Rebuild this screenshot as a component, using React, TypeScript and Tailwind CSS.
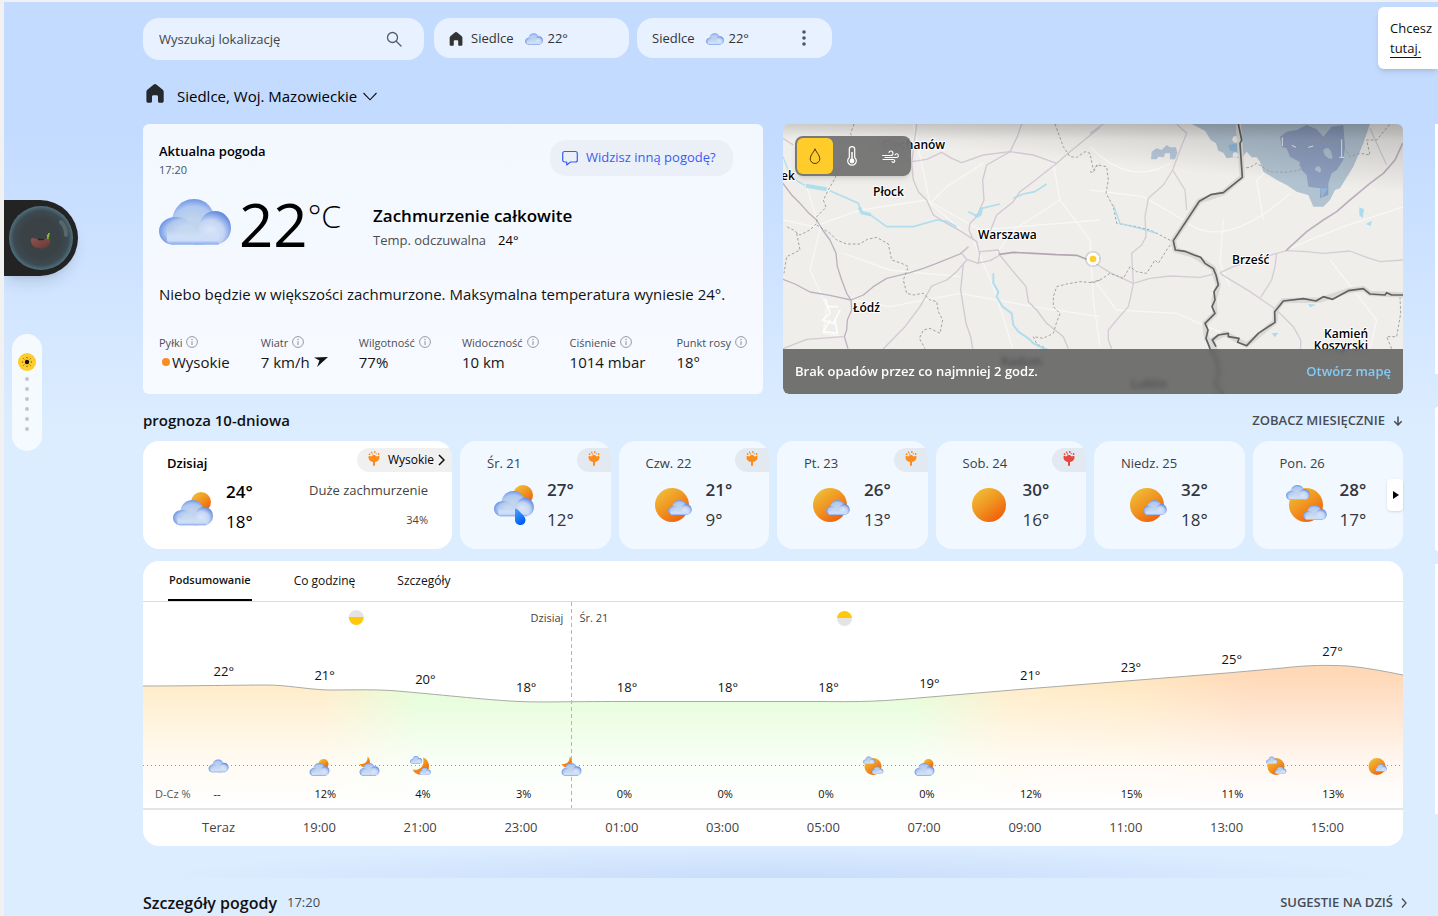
import type { ReactNode } from "react";

type Sky = "cloud" | "mostly" | "rain" | "partly" | "sun" | "mixed" | "moon" | "moonMixed";

interface Day {
    label: string;
    high: string;
    low: string;
    sky: Sky;
    pollen?: "orange" | "red";
}

const days: Day[] = [
    { label: "Śr. 21", high: "27°", low: "12°", sky: "rain", pollen: "orange" },
    { label: "Czw. 22", high: "21°", low: "9°", sky: "partly", pollen: "orange" },
    { label: "Pt. 23", high: "26°", low: "13°", sky: "partly", pollen: "orange" },
    { label: "Sob. 24", high: "30°", low: "16°", sky: "sun", pollen: "red" },
    { label: "Niedz. 25", high: "32°", low: "18°", sky: "partly" },
    { label: "Pon. 26", high: "28°", low: "17°", sky: "mixed" },
];

// top = distance of the temperature label from the top of the plot
const hours = [
    { time: "Teraz", temp: "22°", rain: "--", top: 59 },
    { time: "19:00", temp: "21°", rain: "12%", top: 63 },
    { time: "21:00", temp: "20°", rain: "4%", top: 67 },
    { time: "23:00", temp: "18°", rain: "3%", top: 75 },
    { time: "01:00", temp: "18°", rain: "0%", top: 75 },
    { time: "03:00", temp: "18°", rain: "0%", top: 75 },
    { time: "05:00", temp: "18°", rain: "0%", top: 75 },
    { time: "07:00", temp: "19°", rain: "0%", top: 71 },
    { time: "09:00", temp: "21°", rain: "12%", top: 63 },
    { time: "11:00", temp: "23°", rain: "15%", top: 55 },
    { time: "13:00", temp: "25°", rain: "11%", top: 47 },
    { time: "15:00", temp: "27°", rain: "13%", top: 39 },
];

// one slot per hour, only hours where the sky changes get an icon
const skyByHour: Record<number, Sky> = {
    0: "cloud",
    2: "mostly",
    3: "moon",
    4: "moonMixed",
    7: "moon",
    13: "mixed",
    14: "mostly",
    21: "mixed",
    23: "partly",
};

const metrics = [
    { label: "Pyłki", value: "Wysokie", dot: true },
    { label: "Wiatr", value: "7 km/h", arrow: true },
    { label: "Wilgotność", value: "77%" },
    { label: "Widoczność", value: "10 km" },
    { label: "Ciśnienie", value: "1014 mbar" },
    { label: "Punkt rosy", value: "18°" },
];

function Gradients() {
    return (
        <svg className="absolute h-0 w-0" aria-hidden="true">
            <defs>
                <radialGradient id="cloudBack" cx="0.5" cy="0.7" r="0.72">
                    <stop offset="0.3" stopColor="#c1d4ee" />
                    <stop offset="0.72" stopColor="#b0c8f0" />
                    <stop offset="1" stopColor="#668fe8" />
                </radialGradient>
                <radialGradient id="cloudLeft" cx="0.65" cy="0.55" r="0.66">
                    <stop offset="0.35" stopColor="#c5d8ef" />
                    <stop offset="0.75" stopColor="#b0c8ef" />
                    <stop offset="1" stopColor="#6f97e8" />
                </radialGradient>
                <radialGradient id="cloudRight" cx="0.42" cy="0.65" r="0.64">
                    <stop offset="0" stopColor="#e1ebfb" />
                    <stop offset="0.6" stopColor="#c3d5f4" />
                    <stop offset="1" stopColor="#688ee0" />
                </radialGradient>
                <linearGradient id="cloudBase" x1="0" y1="0" x2="0" y2="1">
                    <stop offset="0" stopColor="#c8daf1" stopOpacity="0" />
                    <stop offset="0.45" stopColor="#cfdff6" />
                    <stop offset="0.75" stopColor="#cbdcf8" />
                    <stop offset="1" stopColor="#83a7ee" />
                </linearGradient>
                <linearGradient id="sunFill" x1="0.1" y1="0.1" x2="0.75" y2="0.95">
                    <stop offset="0" stopColor="#f1bd38" />
                    <stop offset="0.5" stopColor="#f09420" />
                    <stop offset="1" stopColor="#f0600c" />
                </linearGradient>
                <linearGradient id="dropFill" x1="0" y1="0" x2="0.5" y2="1">
                    <stop offset="0" stopColor="#4fa3ff" />
                    <stop offset="1" stopColor="#005df2" />
                </linearGradient>
            </defs>
        </svg>
    );
}

function CloudShape({ transform }: { transform?: string }) {
    return (
        <g transform={transform}>
            <path d="M13 30C11 12 21 0 35 0S57 12 56 28L50 40H16Z" fill="url(#cloudBack)" />
            <path d="M14 45.500C6 45.500 0 39.500 0 32S7 18 16.500 18C25 18 31 22 34 28L46 36V45.500Z" fill="url(#cloudLeft)" />
            <path d="M36 45.500L40 28C41 19 47 12 56 12S72 19.500 72 29 65 45.500 56 45.500Z" fill="url(#cloudRight)" />
            <path d="M8 30H60V45.500H14C10 45.500 8 44 8 40Z" fill="url(#cloudBase)" />
        </g>
    );
}

function SkyIcon({ sky, className }: { sky: Sky; className: string }) {
    return (
        <svg viewBox="0 0 42 42" className={className} aria-hidden="true">
            {sky === "cloud" && <CloudShape transform="translate(1 7) scale(0.56)" />}
            {sky === "mostly" && (
                <>
                    <circle cx="29" cy="16" r="10" fill="url(#sunFill)" />
                    <CloudShape transform="translate(1 14) scale(0.555)" />
                </>
            )}
            {sky === "rain" && (
                <>
                    <circle cx="30" cy="11" r="10" fill="url(#sunFill)" />
                    <CloudShape transform="translate(1 7) scale(0.555)" />
                    <path d="M22 25Q23 24 24 25C29 30 33 33 32.500 36.500C32 39.500 30 41 27.500 41C24 41 22 38.500 22 36Z" fill="url(#dropFill)" />
                </>
            )}
            {(sky === "partly" || sky === "sun") && <circle cx="20" cy="21" r="17" fill="url(#sunFill)" />}
            {sky === "partly" && <CloudShape transform="translate(16 16) scale(0.33)" />}
            {sky === "mixed" && (
                <>
                    <circle cx="20" cy="21" r="17" fill="url(#sunFill)" />
                    <CloudShape transform="translate(0 1) scale(0.33)" />
                    <CloudShape transform="translate(17 21) scale(0.33)" />
                </>
            )}
            {sky === "moon" && (
                <>
                    <path d="M17 1C24 6 24 20 13 22C8 23 3 21 1 16C10 17 18 12 17 1Z" fill="url(#sunFill)" />
                    <CloudShape transform="translate(1 14) scale(0.555)" />
                </>
            )}
            {sky === "moonMixed" && (
                <>
                    <path d="M26 3C42 8 42 32 26 37C16 39 8 34 5 27C20 30 30 20 26 3Z" fill="url(#sunFill)" />
                    <CloudShape transform="translate(0 0) scale(0.34)" />
                    <CloudShape transform="translate(18 23) scale(0.33)" />
                </>
            )}
        </svg>
    );
}

function HomeIcon({ className }: { className: string }) {
    return (
        <svg viewBox="0 0 18 19" className={className} aria-hidden="true">
            <path d="M7.800.5a2 2 0 0 1 2.500 0l6.500 5.200c.6.5.9 1.200.9 2V17c0 1-.8 1.800-1.800 1.800h-2.400c-.8 0-1.500-.7-1.500-1.500v-4.600c0-.8-.6-1.400-1.400-1.400H7.400c-.8 0-1.400.6-1.400 1.400v4.600c0 .8-.7 1.500-1.500 1.500H2.200C1.200 18.800.4 18 .4 17V7.700c0-.8.300-1.500.9-2Z" fill="currentColor" />
        </svg>
    );
}

function InfoIcon() {
    return (
        <svg viewBox="0 0 12 12" className="h-3 w-3" aria-hidden="true">
            <circle cx="6" cy="6" r="5.400" fill="none" stroke="#8b8f95" strokeWidth="0.9" />
            <path d="M6 5.200V9" stroke="#8b8f95" strokeWidth="1" />
            <circle cx="6" cy="3.500" r="0.700" fill="#8b8f95" />
        </svg>
    );
}

function PollenIcon({ color }: { color: "orange" | "red" }) {
    return (
        <svg viewBox="0 0 12 15" className="h-[15px] w-3" fill={color === "red" ? "#e8473c" : "#fc8d1c"} aria-hidden="true">
            <path d="M.6 5.200C1.600 4.600 2.600 5 3.300 5.500C4 4.800 5 4.100 6 4.100S8 4.800 8.700 5.500C9.400 5 10.400 4.600 11.400 5.200C11.900 8 10.300 10.500 7 10.900V14.500L6 15L5 14.500V10.900C1.700 10.500.1 8 .6 5.200Z" />
            <circle cx="1.600" cy="3.200" r="0.900" />
            <circle cx="3.600" cy="1.400" r="0.800" />
            <circle cx="4.600" cy="3" r="0.700" />
            <circle cx="6.800" cy="1" r="0.900" />
            <circle cx="8.200" cy="2.600" r="0.700" />
            <circle cx="10.600" cy="3" r="0.900" />
        </svg>
    );
}

function Header() {
    return (
        <header className="flex items-start">
            <label className="flex h-[42px] w-[281px] items-center rounded-2xl bg-[#e7f1ff] pl-4 pr-[22px]">
                <input
                    type="text"
                    aria-label="Wyszukaj lokalizację"
                    placeholder="Wyszukaj lokalizację"
                    className="min-w-0 flex-1 bg-transparent pt-0.5 text-[13px] text-[#333] outline-none placeholder:text-[#444]"
                />
                <svg viewBox="0 0 16 16" className="h-4 w-4" fill="none" stroke="#555d66" strokeWidth="1.300" aria-hidden="true">
                    <circle cx="6.500" cy="6.500" r="5" />
                    <path d="M10.200 10.200L15 15" strokeLinecap="round" />
                </svg>
            </label>
            <button className="ml-2.5 flex h-10 w-[195px] items-center rounded-2xl bg-[#e7f1ff] pl-[15px] pt-px text-[13px] text-[#333]">
                <HomeIcon className="mr-2 h-[14px] w-[14px]" />
                Siedlce
                <svg viewBox="0 0 72 46" className="ml-3 mr-1 h-3 w-[18px]" aria-hidden="true">
                    <CloudShape />
                </svg>
                22°
            </button>
            <div className="ml-2 flex h-10 w-[195px] items-center rounded-2xl bg-[#e7f1ff] pl-[15px] pr-5 text-[13px] text-[#333]">
                <button className="flex flex-1 items-center pt-px">
                    Siedlce
                    <svg viewBox="0 0 72 46" className="ml-3 mr-1 h-3 w-[18px]" aria-hidden="true">
                        <CloudShape />
                    </svg>
                    22°
                </button>
                <button aria-label="Więcej opcji" className="flex w-4 justify-center">
                    <svg viewBox="0 0 4 16" className="h-4 w-1" fill="#50565e" aria-hidden="true">
                        <circle cx="2" cy="2" r="1.800" />
                        <circle cx="2" cy="8" r="1.800" />
                        <circle cx="2" cy="14" r="1.800" />
                    </svg>
                </button>
            </div>
        </header>
    );
}

function CurrentWeather() {
    return (
        <section className="flex h-[270px] flex-col rounded-md bg-linear-to-b from-[#f3f8ff] to-[#f7faff] px-4 pt-4">
            <div className="flex justify-between">
                <div>
                    <h2 className="text-[13px] leading-[22px] font-semibold text-black">Aktualna pogoda</h2>
                    <p className="text-[11px] leading-4 text-[#4d5258]">17:20</p>
                </div>
                <button className="mr-3.5 flex h-9 w-[183px] items-center gap-2 rounded-2xl bg-[#ebf0f8] pl-3 text-[13px] text-[#3a5cf0]">
                    <svg viewBox="0 0 16 16" className="h-4 w-4" fill="none" stroke="currentColor" strokeWidth="1.200" strokeLinejoin="round" aria-hidden="true">
                        <path d="M2.600 1.500H13.400C14.500 1.500 15.300 2.300 15.300 3.400V10C15.300 11.100 14.500 12 13.400 12H8.500L4.700 14.900V12H2.600C1.500 12 .7 11.100.7 10V3.400C.7 2.300 1.500 1.500 2.600 1.500Z" />
                    </svg>
                    Widzisz inną pogodę?
                </button>
            </div>
            <div className="flex h-[92px] items-center">
                <svg viewBox="0 0 72 46" className="mb-1 h-[46px] w-[72px] shrink-0" aria-hidden="true">
                    <CloudShape />
                </svg>
                <div className="ml-2 flex w-[134px] items-start text-black">
                    <span className="text-[60px] leading-[72px]">22</span>
                    <span className="text-[32px] leading-[56px] font-light">°C</span>
                </div>
                <div className="pt-2">
                    <p className="text-[17px] leading-6 font-semibold text-black">Zachmurzenie całkowite</p>
                    <p className="flex gap-3 text-[13px] leading-6 text-[#4b4f55]">
                        Temp. odczuwalna <span className="text-black">24°</span>
                    </p>
                </div>
            </div>
            <p className="mt-3 text-[15px] leading-6 text-[#111]">
                Niebo będzie w większości zachmurzone. Maksymalna temperatura wyniesie 24°.
            </p>
            <dl className="mt-7 flex justify-between">
                {metrics.map((m) => (
                    <div key={m.label}>
                        <dt className="flex gap-1 text-[11px] leading-[18px] text-[#4b4f55]">
                            {m.label}
                            <span className="pt-0.5">
                                <InfoIcon />
                            </span>
                        </dt>
                        <dd className="flex items-center text-[15px] leading-5 text-[#151515]">
                            {m.dot && <span className="ml-[3px] mr-0.5 h-2 w-2 rounded-full bg-[#fc8d1c]" />}
                            {m.value}
                            {m.arrow && (
                                <svg viewBox="0 0 14 10" className="ml-1 h-2.5 w-3.5" aria-hidden="true">
                                    <path d="M0 .6L14 0L3 10L5.500 3.500Z" fill="#111" />
                                </svg>
                            )}
                        </dd>
                    </div>
                ))}
            </dl>
        </section>
    );
}

function MapDrawing() {
    return (
        <svg viewBox="0 0 620 270" preserveAspectRatio="xMidYMid slice" className="h-full w-full" aria-hidden="true">
            <defs>
                <linearGradient id="mapShade" x1="0" y1="0" x2="0" y2="1">
                    <stop offset="0" stopColor="#000" stopOpacity="0.12" />
                    <stop offset="1" stopColor="#000" stopOpacity="0" />
                </linearGradient>
                <linearGradient id="mapCorner" x1="0.65" y1="0.4" x2="0.85" y2="0">
                    <stop offset="0" stopColor="#000" stopOpacity="0" />
                    <stop offset="1" stopColor="#000" stopOpacity="0.3" />
                </linearGradient>
            </defs>
            <rect width="620" height="270" fill="#efeeeb" />
            <g transform="translate(-3 -4) scale(0.33333)" fill="none" strokeLinejoin="round">
                <g stroke="#f7f7f5" strokeWidth="4">
                    <path d="M9 300L100 320L240 270L440 240L600 330L960 300" />
                    <path d="M80 200L120 330L90 450L140 560L130 640L190 650" />
                    <path d="M190 400L330 450L540 470M400 12L450 250L580 360L640 500L700 690" />
                    <path d="M820 130L840 240L930 360L940 540L960 680" />
                    <path d="M220 540L330 560L540 520L760 560L960 590" />
                    <path d="M610 130L500 200L450 250M650 400L700 330L840 240" />
                </g>
                <path d="M135 535L150 580L128 600L160 610L180 570L165 600L172 640L130 635L150 600M140 560L175 560" stroke="#fdfdfd" strokeWidth="5" />
                <g stroke="#bdb0be" strokeWidth="4">
                    <path d="M9 190L35 225L60 250L85 278L110 300L128 330L150 360L168 400L172 440L185 480L200 520L213 540L215 570L202 600L200 630L193 650L204 686" />
                    <path d="M9 478L45 492L90 516L150 526L213 540L250 525L280 500L320 475L390 458L430 445L470 430L540 402L565 380" />
                </g>
                <g stroke="#d3c8d4" strokeWidth="4">
                    <path d="M565 380L545 400L560 418L595 430L600 395L655 390L660 405L630 422L590 430" />
                    <path d="M410 12L395 130L400 180L415 215L440 240L460 285L500 310L545 335L590 365L598 400" />
                    <path d="M395 125L440 118L485 97L515 115L545 128L610 105L690 95L760 105L830 130L870 95L960 22" />
                    <path d="M725 12L712 50L690 95L620 135L608 180L612 240L590 290L570 310L567 330L580 360" />
                    <path d="M830 130L760 185L720 215L700 245L650 285L640 310L630 335" />
                    <path d="M560 420L530 455L500 480L455 498L420 560L375 620L310 686" />
                    <path d="M550 430L542 510L550 560L558 610L572 650L578 686" />
                    <path d="M655 400L700 455L738 500L745 545L770 570L800 610L850 650L865 686" />
                    <path d="M9 686L80 658L190 650M9 55L40 75" />
                </g>
                <path d="M658 403L700 397L760 400L830 404L890 406L920 418L960 415" stroke="#b4a6b6" strokeWidth="5" />
                <g stroke="#a3a3a1" strokeWidth="3" strokeDasharray="8 6">
                    <path d="M222 12L212 40L218 60L180 130L165 175L145 210L130 240L138 262L110 290L110 310L90 330L60 345L40 330L20 320" />
                    <path d="M110 315L150 340L170 360L200 372L240 372L262 358L290 352L325 372L335 420L365 430L385 440L370 480L380 520L400 525L430 520L450 540L470 545L475 575L488 600L480 640L450 625L430 630L418 655L435 686" />
                    <path d="M50 340L60 390L20 410L12 460M825 12L850 80L870 110L890 112L915 95L930 100L940 150L960 130" />
                    <path d="M960 480L940 488L900 485L860 492L830 500L820 530L820 560L840 580L828 612L820 640L790 655L760 650L770 672L800 686" />
                </g>
                <g stroke="#a9dcee" strokeWidth="5" opacity="0.9">
                    <path d="M9 110L22 145L35 165L55 185L75 196" strokeWidth="4" />
                    <path d="M150 212L235 250L245 280L270 284L320 320L400 320L470 300L500 304L530 320" />
                    <path d="M78 197L140 208" strokeWidth="12" />
                    <path d="M238 262L246 278L272 284" strokeWidth="10" />
                    <path d="M565 275L595 290L605 265L660 252M700 235L730 222L765 215L800 192" />
                    <path d="M584 288L600 284L604 264" strokeWidth="10" />
                    <path d="M640 460L640 490L655 515L650 530L668 560L695 580L700 615L715 635L745 655L760 670L800 690" strokeWidth="6" />
                </g>
            </g>
            <g transform="translate(307 -4) scale(0.33333)" fill="none" strokeLinejoin="round">
                <g stroke="#f7f7f5" strokeWidth="4">
                    <path d="M0 80Q120 200 240 130M0 210L160 230L280 300Q400 400 600 220" />
                    <path d="M20 490L80 570L260 580L400 640M400 300L390 430L420 500M600 90L500 180L520 300" />
                    <path d="M720 420L860 600L840 686M560 400L760 320L940 260" />
                </g>
                <path d="M305 12H840L820 70L790 140L750 205L735 210L720 240L700 260H670L655 225L620 215L590 195L560 180L520 155L510 125L500 112L485 112L470 95L455 115L430 112L410 115L400 98L385 92L378 70L362 60L345 32Z" fill="#b1c2d0" stroke="none" />
                <path d="M570 50L590 35L620 30L650 15L680 28L700 50L725 20L760 15L765 80L760 120L740 150L725 160L715 190V225L690 235V205L655 200L650 165L635 150L628 125L600 110L590 85L575 80Z" fill="#8f9fc0" stroke="none" />
                <path d="M183 118L185 95L200 85L215 90L230 75L240 82L258 82L262 100L255 118L240 118L240 100L225 100L222 112L205 110L200 118Z" fill="#b5c6d8" stroke="none" />
                <path d="M700 90C715 75 725 90 728 115C715 120 700 105 700 90ZM675 150A9 11 0 1 1 690 158Z" fill="#b1c2d0" stroke="none" />
                <path d="M690 205L713 205L695 235ZM415 75L445 70L440 95L420 92Z" fill="#8fb6d9" stroke="none" />
                <circle cx="437" cy="58" r="10" fill="#eeedeb" />
                <circle cx="436" cy="105" r="8" fill="#eeedeb" />
                <g stroke="#d6ccd7" strokeWidth="4">
                    <path d="M260 12L290 40L270 90L248 150L220 195L175 235L165 290L168 350L155 375L125 400L130 490L122 530L115 560L80 600L55 630L55 660L65 686" />
                    <path d="M248 150L285 210L290 270M0 420L60 458L130 490L180 475L240 468L330 472L380 460" />
                    <path d="M390 458L430 440L560 400L588 392L650 395L700 400L780 393L830 412L870 425L940 420" />
                    <path d="M560 400L555 440L545 480L512 532M390 460L480 515L560 570L610 620L632 660V686M840 25L860 70L890 135" />
                    <path d="M0 40L40 12" />
                </g>
                <path d="M588 392L650 335L700 300L740 275L780 240L840 190L880 160L915 120L938 70" stroke="#bdb0be" strokeWidth="5" />
                <g stroke="#a3a3a1" strokeWidth="3" strokeDasharray="8 6">
                    <path d="M0 155L10 158L20 135L50 140L55 180L48 220L70 260L80 310L130 318L180 330L210 345L248 365L230 390L205 430L195 420L170 460L140 455L120 440L100 475L60 460L30 480L0 488" />
                    <path d="M455 145L480 142L500 130L540 155L590 157L630 150L630 110L640 80L670 50L710 70L750 65L780 110L810 100L840 105L830 60L860 60L900 12" />
                    <path d="M930 530L932 580L920 650L890 650L905 686" />
                </g>
                <g stroke="#d9d9d7" strokeWidth="16">
                    <path d="M445 12L457 170L400 218L328 243L250 362L256 390L310 405L370 445L385 495L372 540L375 580L345 610L350 655L375 686L390 760L375 822" />
                    <path d="M375 686L367 660L405 640L470 675L555 605L557 570L580 542L690 540L775 512L820 506L840 520L940 525" />
                </g>
                <g stroke="#616161" strokeWidth="5">
                    <path d="M445 12L455 60L450 70L457 172L400 218L362 224L328 244L250 362L256 390L285 394L310 404L332 412L345 430L370 446L378 465L385 495L372 515L375 540L366 560L375 580L345 610L354 630L348 655L360 686L380 720L385 760L375 790L400 822" />
                    <path d="M378 680L367 660L385 645L415 640L415 650L447 655L443 667L470 677L505 640L555 607L554 575L580 543L640 536L678 543L700 530L728 538L775 512L820 506L840 522L885 525L890 518L905 525H940" />
                </g>
                <path d="M70 255L90 310L160 328L200 340" stroke="#a9dcee" strokeWidth="4" />
                <path d="M808 262L822 268L818 295L808 285ZM828 312L846 302L842 318ZM545 640L565 638L555 652ZM655 552L678 554L660 562Z" fill="#a9dcee" />
                <g stroke="#eef0f2" strokeWidth="3">
                    <path d="M577 52V78M605 76L618 82M655 82L670 78M755 58V112M748 112H762" />
                </g>
            </g>
            <rect width="620" height="16" fill="url(#mapShade)" />
            <rect width="620" height="120" fill="url(#mapCorner)" opacity="0.6" />
            <g fontSize="12" fontWeight="600" fill="#000" stroke="#fff" strokeWidth="2" paintOrder="stroke" strokeLinejoin="round">
                <text x="99" y="25">Ciechanów</text>
                <text x="-2" y="56">ek</text>
                <text x="90" y="72">Płock</text>
                <text x="195" y="115">Warszawa</text>
                <text x="70" y="188">Łódź</text>
                <text x="449" y="140">Brześć</text>
                <text x="585" y="214" textAnchor="end">Kamień</text>
                <text x="585" y="226" textAnchor="end">Koszyrski</text>
                <text x="218" y="242">Radom</text>
                <text x="348" y="264">Lublin</text>
            </g>
            <circle cx="310" cy="135" r="8" fill="#000" opacity="0.12" />
            <circle cx="310" cy="135" r="6.500" fill="#fff" />
            <circle cx="310" cy="135" r="3.300" fill="#ffcc29" />
        </svg>
    );
}

function WeatherMap() {
    return (
        <section className="relative h-[270px] overflow-hidden rounded-md">
            <MapDrawing />
            <div className="absolute left-3 top-3 flex rounded-lg bg-[#6b6b6b]/90 p-0.5 shadow-md backdrop-blur-sm">
                <button aria-label="Opady" className="flex h-9 w-9 items-center justify-center rounded-md bg-[#ffcc29]">
                    <svg viewBox="0 0 12 16" className="h-4 w-3" fill="none" stroke="#4a3c10" strokeWidth="1" aria-hidden="true">
                        <path d="M6 .8C6.500 3.500 10.800 7 10.800 10.700A4.800 4.800 0 0 1 1.200 10.700C1.200 7 5.500 3.500 6 .8Z" />
                    </svg>
                </button>
                <button aria-label="Temperatura" className="flex h-9 w-[38px] items-center justify-center">
                    <svg viewBox="0 0 10 20" className="h-5 w-2.5" fill="none" stroke="#fff" strokeWidth="1.200" aria-hidden="true">
                        <path d="M2.300 11.500V3.300A2.700 2.700 0 0 1 7.700 3.300V11.500A4.300 4.300 0 1 1 2.300 11.500Z" />
                        <path d="M5 6V15" strokeWidth="1.500" />
                        <circle cx="5" cy="15" r="1.800" fill="#fff" />
                    </svg>
                </button>
                <button aria-label="Wiatr" className="flex h-9 w-[38px] items-center justify-center">
                    <svg viewBox="0 0 17 13" className="h-[13px] w-[17px]" fill="none" stroke="#fff" strokeWidth="1.100" strokeLinecap="round" aria-hidden="true">
                        <path d="M.6 5.500H9C11.800 5.500 11.500 1 8.800 1C7.700 1 7 1.700 7 2.600" />
                        <path d="M3 7.500H14.500C17 7.500 16.800 3.800 14.600 3.800C13.800 3.800 13.200 4.300 13.100 5" />
                        <path d="M1 9.500H11C13.400 9.500 13.200 12.400 11.400 12.400C10.700 12.400 10.200 12 10 11.500" />
                    </svg>
                </button>
            </div>
            <div className="absolute inset-x-0 bottom-0 flex h-[45px] items-center justify-between bg-[#5c5c5c]/85 px-3 text-[13px] font-semibold backdrop-blur-[2px]">
                <p className="text-white">Brak opadów przez co najmniej 2 godz.</p>
                <a href="#mapa" className="text-[#85caf5]">Otwórz mapę</a>
            </div>
        </section>
    );
}

function PollenBadge({ color, children }: { color: "orange" | "red"; children?: ReactNode }) {
    return (
        <span className="absolute right-0 top-[7px] flex h-6 items-center gap-2 rounded-l-full bg-black/6 px-[11px] text-xs text-black">
            <span className="pb-1">
                <PollenIcon color={color} />
            </span>
            {children}
        </span>
    );
}

function Forecast() {
    return (
        <section>
            <div className="flex h-[47px] items-center justify-between pt-1.5">
                <h2 className="text-[15px] font-semibold text-[#111]">prognoza 10-dniowa</h2>
                <a href="#miesiac" className="flex items-center gap-2 text-[13px] font-semibold text-[#474c52]">
                    ZOBACZ MIESIĘCZNIE
                    <svg viewBox="0 0 10 10" className="h-2.5 w-2.5" fill="none" stroke="currentColor" strokeWidth="1.500" aria-hidden="true">
                        <path d="M5 .5V9M1.300 5.300L5 9L8.700 5.300" />
                    </svg>
                </a>
            </div>
            <div className="relative grid grid-cols-8 gap-2">
                <button className="relative col-span-2 flex h-[108px] flex-col overflow-hidden rounded-2xl bg-white pt-3 text-left">
                    <span className="pl-6 text-[13px] leading-5 font-semibold text-black">Dzisiaj</span>
                    <PollenBadge color="orange">
                        <span>Wysokie</span>
                        <svg viewBox="0 0 7 12" className="-ml-1 -mr-1 h-3 w-[7px]" fill="none" stroke="#111" strokeWidth="1.500" aria-hidden="true">
                            <path d="M1 1L6 6L1 11" />
                        </svg>
                    </PollenBadge>
                    <span className="mt-0.5 flex w-full items-center pl-[29px] pr-6">
                        <SkyIcon sky="mostly" className="h-[42px] w-[42px]" />
                        <span className="ml-3 text-[17px] leading-[30px] text-black">
                            <b className="block font-semibold">24°</b>
                            <span className="block">18°</span>
                        </span>
                        <span className="ml-auto pb-1 text-right text-[13px] leading-[30px] text-[#444]">
                            <span className="block">Duże zachmurzenie</span>
                            <span className="block text-[11px] leading-[30px]">34%</span>
                        </span>
                    </span>
                </button>
                {days.map((d) => (
                    <button key={d.label} className="relative flex h-[108px] flex-col overflow-hidden rounded-2xl bg-[#f1f8ff] pt-3 text-left">
                        <span className="pl-[27px] text-[13px] leading-5 text-[#3c4043]">{d.label}</span>
                        {d.pollen && <PollenBadge color={d.pollen} />}
                        <span className="mt-0.5 flex items-center pl-[33px]">
                            <SkyIcon sky={d.sky} className="h-[42px] w-[42px]" />
                            <span className="ml-3 text-[17px] leading-[30px] text-[#33363a]">
                                <b className="block font-semibold">{d.high}</b>
                                <span className="block">{d.low}</span>
                            </span>
                        </span>
                    </button>
                ))}
                <button aria-label="Następne dni" className="absolute right-0 top-[38px] flex h-8 w-4 items-center justify-center rounded bg-white shadow">
                    <svg viewBox="0 0 6 8" className="ml-0.5 h-2 w-1.5" aria-hidden="true">
                        <path d="M0 0L6 4L0 8Z" fill="#000" />
                    </svg>
                </button>
            </div>
        </section>
    );
}

function HourlyChart() {
    const curve =
        "M0 84C50 84 100 83 122 83C145 83 160 87 185 88C215 88 235 87 260 89.500C300 93 350 98.500 377 99.500C400 100.500 420 99.500 479 99.500H680C720 100 735 99.500 781 95.500L882 87L983 79L1084 71L1140 66C1165 63 1185 63 1205 64C1225 66 1240 69 1260 73";

    return (
        <section className="mt-3 overflow-hidden rounded-2xl bg-white">
            <div role="tablist" className="flex h-[41px] gap-[42px] border-b border-[#dcdcdc] pl-[25px] text-xs text-[#111]">
                <button role="tab" aria-selected="true" className="border-b-2 border-black px-px text-[11px] font-semibold">Podsumowanie</button>
                <button role="tab" aria-selected="false">Co godzinę</button>
                <button role="tab" aria-selected="false">Szczegóły</button>
            </div>
            <div className="relative h-[208px] border-b-2 border-[#e2e4e5]">
                <svg viewBox="0 0 1260 206" preserveAspectRatio="none" className="absolute inset-0 h-full w-full" aria-hidden="true">
                    <defs>
                        <linearGradient id="tempFill">
                            <stop offset="0.140" stopColor="#ffebc4" />
                            <stop offset="0.220" stopColor="#e1fdd3" />
                            <stop offset="0.610" stopColor="#e1fdd3" />
                            <stop offset="0.690" stopColor="#ffebc4" />
                            <stop offset="0.790" stopColor="#ffe6bd" />
                            <stop offset="0.880" stopColor="#ffd8b8" />
                            <stop offset="1" stopColor="#ffd8b8" />
                        </linearGradient>
                        <linearGradient id="fadeOut" x1="0" y1="0" x2="0" y2="1">
                            <stop offset="0.350" stopColor="#fff" stopOpacity="0" />
                            <stop offset="0.780" stopColor="#fff" stopOpacity="0.800" />
                            <stop offset="1" stopColor="#fff" />
                        </linearGradient>
                    </defs>
                    <path d={`${curve}V206H0Z`} fill="url(#tempFill)" />
                    <rect y="0" width="1260" height="206" fill="url(#fadeOut)" />
                    <path d={curve} fill="none" stroke="#aaaaa6" strokeWidth="1" />
                    <path d="M0 163.500H1260" stroke="#999" strokeDasharray="1 3" />
                    <path d="M428.500 0V206" stroke="#b5b5b5" strokeDasharray="4 3" />
                </svg>
                <div className="relative flex h-full flex-col text-[#111]">
                    <div className="flex h-8 text-[11px] leading-8 text-[#444]">
                        <span className="w-[34%] pr-2 text-right">Dzisiaj</span>
                        <span className="pl-2">Śr. 21</span>
                    </div>
                    <span className="absolute left-[17%] top-2 h-[15px] w-[15px] -translate-x-[55%] rounded-full bg-linear-to-b from-[#e4e4e4] from-50% to-[#ffc90a] to-50%" />
                    <span className="absolute left-[56%] top-[9px] h-[15px] w-[15px] -translate-x-[80%] rounded-full bg-linear-to-b from-[#ffc90a] from-50% to-[#e4e4e4] to-50%" />
                    <ol className="absolute inset-x-0 top-0 flex text-[13px] leading-5">
                        <li className="w-[2%]" aria-hidden="true" />
                        {hours.map((h) => (
                            <li key={h.time} className="w-[8%]">
                                <span className="ml-[calc(50%-5px)] block" style={{ marginTop: h.top }}>{h.temp}</span>
                            </li>
                        ))}
                    </ol>
                    <div className="mt-[120px] flex h-6">
                        <span className="w-[4%]" />
                        {Array.from({ length: 24 }, (_, i) => (
                            <span key={i} className="flex w-[4%] items-center justify-center">
                                {skyByHour[i] && <SkyIcon sky={skyByHour[i]} className="h-[21px] w-[21px] shrink-0" />}
                            </span>
                        ))}
                    </div>
                    <div className="relative mt-1.5 flex text-[11px] leading-5">
                        <span className="absolute left-3 text-[#555]">D-Cz %</span>
                        <span className="w-[2%]" />
                        {hours.map((h) => (
                            <span key={h.time} className="w-[8%]">
                                <span className="ml-[calc(50%-5px)] block">{h.rain}</span>
                            </span>
                        ))}
                    </div>
                </div>
            </div>
            <div className="flex h-9 items-center text-center text-[13px] text-[#444]">
                <span className="w-[2%]" />
                {hours.map((h) => (
                    <span key={h.time} className="w-[8%]">{h.time}</span>
                ))}
            </div>
        </section>
    );
}

function LeftRail() {
    return (
        <aside className="flex w-[139px] shrink-0 flex-col items-start gap-[58px] pt-[198px]">
            <button aria-label="Roślina" className="flex h-[76px] w-[74px] items-center rounded-r-full bg-[#232323] pl-[5px] shadow-lg">
                <svg viewBox="0 0 64 64" className="h-16 w-16" aria-hidden="true">
                    <defs>
                        <radialGradient id="orb">
                            <stop offset="0.6" stopColor="#3b4245" />
                            <stop offset="0.85" stopColor="#3c4a52" />
                            <stop offset="1" stopColor="#50707f" />
                        </radialGradient>
                        <linearGradient id="bean" x1="0" y1="0" x2="1" y2="1">
                            <stop offset="0" stopColor="#8c5350" />
                            <stop offset="1" stopColor="#633936" />
                        </linearGradient>
                    </defs>
                    <circle cx="32" cy="32" r="32" fill="url(#orb)" />
                    <path d="M52 16C55 19 57 24 57 29" stroke="#7c8b90" strokeWidth="4" strokeLinecap="round" fill="none" opacity="0.45" />
                    <path d="M22 33C24 30 28 34 32 34C36 34 38 31 41 33C42 39 38 42.500 32 42.500C26 42.500 21 39 22 33Z" fill="url(#bean)" />
                    <path d="M39 33C38 30 40 30 40 27M38 29L40 31" stroke="#83c22c" strokeWidth="1.600" fill="none" />
                    <path d="M29 33.500H35" stroke="#3a1e1e" strokeWidth="1.500" />
                </svg>
            </button>
            <div className="ml-2 flex w-[30px] flex-col items-center gap-1.5 rounded-full bg-[#f5faff] pb-5 pt-[19px]">
                <svg viewBox="0 0 18 18" className="h-[18px] w-[18px]" aria-hidden="true">
                    <circle cx="9" cy="9" r="9" fill="#ffcc29" />
                    <circle cx="9" cy="9" r="2.200" fill="#111" />
                    <path d="M9 4V5.200M9 12.800V14M4 9H5.200M12.800 9H14M5.400 5.400L6.300 6.300M11.700 11.700L12.600 12.600M12.600 5.400L11.700 6.300M6.300 11.700L5.400 12.600" stroke="#4a3d10" strokeWidth="0.900" />
                </svg>
                {[1, 2, 3, 4, 5, 6].map((n) => (
                    <span key={n} className="h-1 w-1 rounded-full bg-[#c1c6cb]" />
                ))}
            </div>
        </aside>
    );
}

export default function App() {
    return (
        <div className="relative flex min-h-screen overflow-hidden border-l-4 border-t-2 border-[#f1f1f1] bg-linear-to-b from-[#c3dbff] from-[130px] to-[#dcedff] to-[430px] font-['Open_Sans',sans-serif]">
            <Gradients />
            <LeftRail />
            <main className="min-w-0 flex-1 pt-4">
                <Header />
                <div className="flex h-16 items-center pt-2">
                    <HomeIcon className="mb-1.5 ml-[3px] mr-[13px] h-[19px] w-[18px] text-[#24292e]" />
                    <button className="flex items-center gap-1.5 text-[15px] text-black">
                        Siedlce, Woj. Mazowieckie
                        <svg viewBox="0 0 14 9" className="h-[9px] w-3.5" fill="none" stroke="#111" strokeWidth="1.100" aria-hidden="true">
                            <path d="M.5 1L7 7.800L13.500 1" />
                        </svg>
                    </button>
                </div>
                <div className="grid grid-cols-2 gap-5">
                    <CurrentWeather />
                    <WeatherMap />
                </div>
                <Forecast />
                <HourlyChart />
                <div className="h-8 bg-[radial-gradient(ellipse_50%_100%_at_50%_100%,#c8ddfc,#dcedff)]" />
                <div className="flex h-[50px] items-center justify-between">
                    <h2 className="flex items-center gap-2.5 text-base font-semibold text-[#111]">
                        Szczegóły pogody
                        <span className="text-[13px] font-normal text-[#474c52]">17:20</span>
                    </h2>
                    <a href="#sugestie" className="-mr-1 flex items-center gap-2 text-[13px] font-semibold text-[#474c52]">
                        SUGESTIE NA DZIŚ
                        <svg viewBox="0 0 6 10" className="h-2.5 w-1.5" fill="none" stroke="currentColor" strokeWidth="1.300" aria-hidden="true">
                            <path d="M1 .5L5 5L1 9.500" />
                        </svg>
                    </a>
                </div>
            </main>
            <aside className="ml-8 flex w-[3px] shrink-0 flex-col pt-[122px]">
                <div className="h-[250px] bg-white" />
                <div className="mt-[33px] h-[144px] rounded-l-xl bg-white" />
                <div className="mt-[13px] h-[250px] bg-white" />
            </aside>
            <div className="absolute right-0 top-[5px] w-[60px] overflow-hidden rounded-l-md bg-white py-[11px] pl-3 text-[13px] leading-5 whitespace-nowrap text-[#111] shadow-md">
                <p>Chcesz</p>
                <a href="#tutaj" className="underline underline-offset-4">tutaj.</a>
            </div>
        </div>
    );
}
